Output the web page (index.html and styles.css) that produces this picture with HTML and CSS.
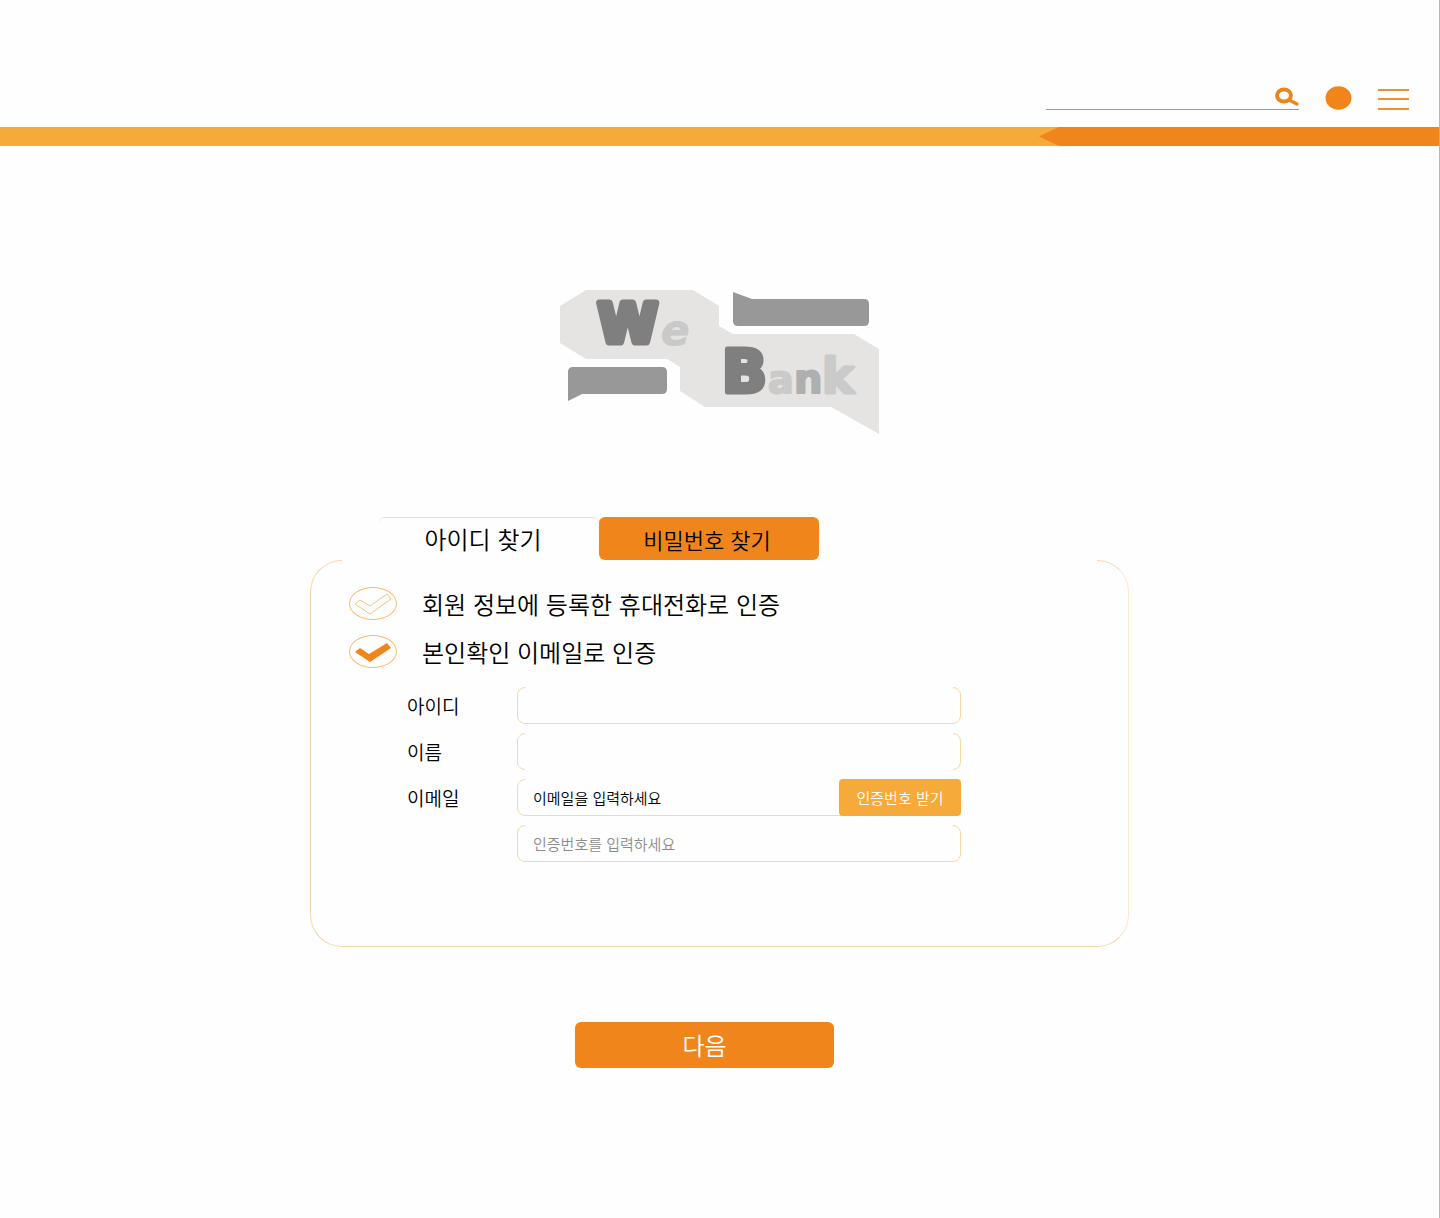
FILE: index.html
```html
<!DOCTYPE html>
<html lang="ko">
<head>
<meta charset="utf-8">
<meta name="viewport" content="width=device-width, initial-scale=1">
<title>We Bank</title>
<link rel="stylesheet" href="styles.css">
</head>
<body>
<header class="header">
  <form class="search" role="search">
    <input class="search-input" type="search" aria-label="검색">
    <button class="icon-button" type="submit" aria-label="검색">
      <svg width="24" height="19" viewBox="0 0 24 19" fill="none" stroke="#ee841c">
        <ellipse cx="9" cy="8.500" rx="7" ry="6" stroke-width="3.800"/>
        <path d="M14 13L22 17" stroke-width="3.200" stroke-linecap="round"/>
      </svg>
    </button>
  </form>
  <button class="icon-button" type="button" aria-label="프로필">
    <svg width="27" height="24" viewBox="0 0 27 24"><ellipse cx="13.500" cy="12" rx="13" ry="11.800" fill="#f0861b"/></svg>
  </button>
  <button class="icon-button" type="button" aria-label="메뉴">
    <svg width="31" height="22" viewBox="0 0 31 22" stroke="#ee9030" stroke-width="2"><path d="M0 2h31M0 11h31M0 21h31"/></svg>
  </button>
</header>
<div class="band"><div class="band-accent"></div></div>

<main class="main">
  <svg class="logo" width="319" height="144" viewBox="0 0 319 144" role="img" aria-label="We Bank">
    <path fill="#e5e4e2" d="M0 16L26 0H133L159 16V36L173 44H294L319 59V144L271 117H145L120 101V77L107 69H26L0 53Z"/>
    <path fill="#989898" d="M173 2L192 9H304Q309 9 309 14V31Q309 36 304 36H178Q173 36 173 31Z"/>
    <path fill="#989898" d="M8 82Q8 77 13 77H102Q107 77 107 82V99Q107 104 102 104H22L8 111Z"/>
    <g class="logo-text">
      <text x="101" y="55" font-size="42" font-style="italic" fill="#c9c9c9" stroke="#c9c9c9" stroke-width="1">e</text>
      <text x="38" y="52" font-size="54" fill="#7f7f80" stroke="#7f7f80" stroke-width="7">W</text>
      <text x="208" y="103" font-size="38" fill="#cacaca" stroke="#cacaca" stroke-width="2">a</text>
      <text x="262" y="103" font-size="48" fill="#cacaca" stroke="#cacaca" stroke-width="3">k</text>
      <text x="234" y="103" font-size="40" fill="#adb0af" stroke="#adb0af" stroke-width="2">n</text>
      <text x="162" y="102" font-size="59" fill="#7f7f80" stroke="#7f7f80" stroke-width="5">B</text>
    </g>
  </svg>

  <div class="finder">
    <div class="tabs">
      <button class="tab" type="button">아이디 찾기</button>
      <button class="tab tab-active" type="button">비밀번호 찾기</button>
    </div>
    <form class="panel" id="find-form">
      <div class="options">
        <label class="option">
          <span class="mark">
            <input type="radio" name="method">
            <svg width="48" height="33" viewBox="0 0 48 33"><path d="M6 17L11 13L21 19L38 7L42 12L21 27Z"/></svg>
          </span>
          회원 정보에 등록한 휴대전화로 인증
        </label>
        <label class="option">
          <span class="mark">
            <input type="radio" name="method" checked>
            <svg width="48" height="33" viewBox="0 0 48 33"><path d="M6 17L11 13L20 19L38 8L42 13L21 27Z"/></svg>
          </span>
          본인확인 이메일로 인증
        </label>
      </div>
      <div class="fields">
        <label for="user-id">아이디</label>
        <div class="field"><input id="user-id" type="text"></div>
        <label for="user-name">이름</label>
        <div class="field field-open"><input id="user-name" type="text"></div>
        <label for="email">이메일</label>
        <div class="field">
          <input id="email" class="email" type="email" placeholder="이메일을 입력하세요">
          <button class="code-button" type="button">인증번호 받기</button>
        </div>
        <div class="field field-code"><input type="text" aria-label="인증번호" placeholder="인증번호를 입력하세요"></div>
      </div>
    </form>
  </div>
  <button class="next" type="submit" form="find-form">다음</button>
</main>
</body>
</html>
```
FILE: styles.css
```css
* { box-sizing: border-box; }

body {
  margin: 0;
  min-height: 100vh;
  border-right: 1px solid #b8b8b8;
  background: #fefefe;
  color: #000;
  font-family: "Noto Sans CJK KR", sans-serif;
  font-weight: 350;
}

button, input {
  margin: 0;
  padding: 0;
  border: 0;
  background: none;
  color: inherit;
  font: inherit;
}

button { cursor: pointer; }
svg { display: block; }

.header {
  display: flex;
  justify-content: flex-end;
  align-items: flex-end;
  gap: 26px;
  padding: 84px 30px 16px;
}

.search {
  display: flex;
  width: 253px;
  height: 26px;
  border-bottom: 1px solid #ee8420;
}

.search-input {
  flex: 1;
  min-width: 0;
  outline: 0;
}

.search .icon-button { align-self: center; }

.band {
  display: flex;
  justify-content: flex-end;
  height: 19px;
  margin-top: 1px;
  background: #f6aa39;
}

.band-accent {
  width: 400px;
  background: #f0861b;
  clip-path: polygon(0 50%, 20px 0, 100% 0, 100% 100%, 20px 100%);
}

.main {
  display: flex;
  flex-direction: column;
  align-items: center;
  padding: 144px 24px 150px;
}

.logo-text {
  font-family: "DejaVu Sans", sans-serif;
  font-weight: 700;
  stroke-linejoin: round;
}

.finder {
  width: 100%;
  max-width: 819px;
  margin-top: 83px;
}

.tabs {
  display: flex;
  padding-left: 69px;
}

.tab {
  width: 220px;
  height: 43px;
  border-top: 1px solid #f8dcb5;
  border-radius: 6px;
  font-size: 24px;
  line-height: 40px;
  padding-right: 12px;
}

.tab-active {
  border-color: #f0861b;
  background: #f0861b;
  font-size: 22px;
  padding-right: 4px;
}

.panel {
  position: relative;
  padding: 26px 20px 84px 38px;
  border: 1px solid #f5d7a6;
  border-right-color: #fbe8cf;
  border-radius: 32px;
}

/* the outlines are open along the top edge */
.panel::before,
.field::before,
.field-open::after {
  content: "";
  position: absolute;
  top: -1px;
  right: 31px;
  left: 31px;
  height: 1px;
  background: #fefefe;
}

.options {
  display: grid;
  gap: 15px;
}

.option {
  display: flex;
  align-items: center;
  gap: 25px;
  height: 33px;
  font-size: 24px;
}

.mark {
  display: grid;
  flex: none;
}

.mark input,
.mark svg { grid-area: 1 / 1; }

.mark input {
  appearance: none;
  width: 48px;
  height: 33px;
  border: 1px solid #f3bd6c;
  border-radius: 50%;
}

.mark path {
  fill: none;
  stroke: #f6c27c;
}

.mark input:checked + svg path {
  fill: #f0861b;
  stroke: none;
}

.fields {
  display: grid;
  grid-template-columns: 110px minmax(0, 444px);
  align-items: center;
  row-gap: 9px;
  padding-left: 58px;
  margin-top: 19px;
  font-size: 19px;
  line-height: 28px;
}

.field {
  position: relative;
  display: flex;
  height: 37px;
  border: 1px solid #f6d9a8;
  border-radius: 8px;
  font-size: 15px;
}

.field::before,
.field-open::after {
  right: 7px;
  left: 7px;
}

.field-open::after {
  top: auto;
  bottom: -1px;
}

.field-code { grid-column: 2; }

.field input {
  flex: 1;
  min-width: 0;
  padding-left: 15px;
  outline: 0;
}

.field input::placeholder {
  color: #8c8c8c;
  opacity: 1;
}

.field .email::placeholder { color: #000; }

.code-button {
  position: relative;
  z-index: 1;
  width: 122px;
  margin: -1px;
  border-radius: 4px;
  background: #f6aa39;
  color: #fff;
}

.next {
  width: 259px;
  height: 46px;
  margin: 75px 30px 0 0;
  border-radius: 6px;
  background: #f0861b;
  color: #fff;
  font-size: 24px;
  line-height: 46px;
}
```
